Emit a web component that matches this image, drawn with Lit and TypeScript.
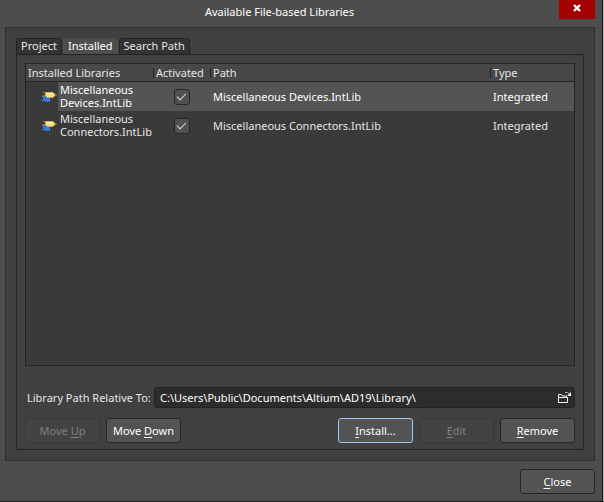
import { LitElement, html, css, svg } from "lit";
import { customElement, state } from "lit/decorators.js";
import { classMap } from "lit/directives/class-map.js";

interface Library {
  name: string[];
  path: string;
  type: string;
  active: boolean;
}

const componentIcon = html`<svg class="part" width="15" height="12" viewBox="0 0 15 12" aria-hidden="true">
  ${svg`
    <path d="M1 4h6l1 2v4H2z" fill="#2f70d4"/>
    <path d="M0 5.500h2M1 7.500h1M0 9.500h2M3.500 10v1M5.500 10v1M7.500 9v2" stroke="#4f94ee" fill="none"/>
    <path d="M3 8.500h4" stroke="#3f82e4" fill="none"/>
    <path d="M1 1.500h3M1 4.500h3" stroke="#8f7d4c" fill="none"/>
    <path d="M3.500 1.500h7.500l2.500 2.500-2.500 2.500h-6l-1.500-1.500z" fill="#f6dc84" stroke="#d0a94c"/>
    <path d="M4 2.500h7" stroke="#fff3bd" fill="none"/>
    <path d="M13 4h2" stroke="#8f7d4c" fill="none"/>`}
</svg>`;

const folderIcon = html`<svg width="14" height="11" viewBox="0 0 14 11" aria-hidden="true">
  <path d="M.5 10.500v-8h3l1 1.500h4v1.500M.5 5.500h9v5h-9z" fill="none" stroke="#f0f0f0"/>
  <path d="M7 .5h2.500l2 1.500" fill="none" stroke="#b0b0b0"/>
  <path d="M13 0v4h-4z" fill="#f0f0f0"/>
</svg>`;

@customElement("app-root")
export class AppRoot extends LitElement {
  @state() private selected = 0;
  @state() private tab = "Installed";
  @state() private libraries: Library[] = [
    { name: ["Miscellaneous", "Devices.IntLib"], path: "Miscellaneous Devices.IntLib", type: "Integrated", active: true },
    { name: ["Miscellaneous", "Connectors.IntLib"], path: "Miscellaneous Connectors.IntLib", type: "Integrated", active: true },
  ];

  static styles = css`
    * { box-sizing: border-box; }
    :host {
      display: flex;
      flex-direction: column;
      min-height: 100vh;
      box-sizing: border-box;
      padding: 0 8px 7px 5px;
      background: #4d4d4d;
      border-right: 1px solid #bdbdbd;
      border-bottom: 1px solid #1a1a1a;
      box-shadow: inset -1px 0 #1a1a1a;
      color: #e6e6e6;
      font: 11px/14px "Noto Sans", "Open Sans", sans-serif;
    }
    button, input { font: inherit; color: inherit; margin: 0; }
    u { text-underline-offset: 2px; text-decoration-skip-ink: none; }

    .titlebar { display: flex; height: 27px; margin-left: -5px; }
    .title { flex: 1; margin: 0; padding-top: 5px; text-align: center; font: inherit; color: #fff; }
    .dismiss {
      display: flex; align-items: center; justify-content: center;
      width: 36px; height: 19px; padding: 0 0 3px; border: 0; background: #a30000;
    }

    .body {
      flex: 1; display: flex; flex-direction: column;
      padding: 10px; border: 1px solid #303030; background: #404040;
    }
    .tabs { display: flex; gap: 1px; }
    .tab {
      height: 17px; padding: 0 4px 1px; margin-bottom: -1px;
      border: 1px solid #242424; border-radius: 3px 3px 0 0;
      background: #333; line-height: 14px;
    }
    .tab.current { background: #4d4d4d; border-color: #4d4d4d; color: #fff; }

    .panel {
      flex: 1; display: flex; flex-direction: column;
      padding: 8px 8px 6px; border: 1px solid #242424;
    }
    .list { flex: 1; border: 1px solid #242424; background: #3a3a3a; }
    table { width: 100%; table-layout: fixed; border-collapse: separate; border-spacing: 0; }
    .c-name { width: 128px; }
    .c-active { width: 57px; }
    .c-type { width: 83px; }
    th {
      height: 18px; padding: 0; background: #484848;
      border-bottom: 1px solid #242424; font-weight: 400; text-align: left;
    }
    .head { display: block; height: 10px; padding-left: 2px; line-height: 10px; white-space: nowrap; }
    th:not(:last-child) .head { border-right: 1px solid #242424; }
    td { height: 29px; padding: 0 0 0 2px; }
    td.name { padding: 0; }
    .entry { display: flex; height: 29px; }
    .part { flex: none; margin: 9px 1px 0 16px; }
    .label { flex: 1; padding: 1px 0 2px 2px; line-height: 13px; white-space: nowrap; }
    .selected td:not(.name), .selected .label { background: #545454; color: #fff; }
    td.active { padding: 0 2px 0 0; text-align: center; }
    .tick {
      appearance: none; display: inline-grid; place-items: center; vertical-align: middle;
      width: 16px; height: 16px; border: 1px solid #262626; border-radius: 3px; background: #505050;
    }
    .tick:checked::before {
      content: ""; width: 8px; height: 4px; margin-top: -2px;
      border: solid #e0e0e0; border-width: 0 0 1px 1px; transform: rotate(-45deg);
    }

    .location { display: flex; align-items: center; margin-top: 21px; gap: 7px; }
    .location label { width: 122px; padding-left: 2px; white-space: nowrap; }
    .field {
      flex: 1; display: flex; align-items: center; height: 21px; padding-right: 2px;
      border: 1px solid #222; border-radius: 3px; background: #2c2c2c;
    }
    .field input { flex: 1; min-width: 0; padding: 0 5px; border: 0; outline: 0; background: none; color: #fff; }
    .browse { display: flex; padding: 0; border: 0; background: none; }

    .actions { display: flex; gap: 6px; margin-top: 10px; }
    .spacer { flex: 1; }
    .btn {
      width: 75px; height: 25px; padding: 0; border: 1px solid #262626; border-radius: 3px;
      background: #535353; color: #fff; text-align: center;
    }
    .btn:disabled { border-color: #3a3a3a; background: #434343; color: #808080; }
    .btn.primary { border-color: #9cc8f0; }
    .footer { display: flex; justify-content: flex-end; margin-top: 8px; }
  `;

  private toggle(index: number) {
    this.libraries = this.libraries.map((l, i) => (i === index ? { ...l, active: !l.active } : l));
  }

  private row(lib: Library, index: number) {
    return html`<tr class=${classMap({ selected: index === this.selected })} @click=${() => (this.selected = index)}>
      <td class="name">
        <div class="entry">${componentIcon}<span class="label">${lib.name[0]}<br />${lib.name[1]}</span></div>
      </td>
      <td class="active">
        <input class="tick" type="checkbox" aria-label="Activated: ${lib.path}"
          .checked=${lib.active} @change=${() => this.toggle(index)} />
      </td>
      <td>${lib.path}</td>
      <td>${lib.type}</td>
    </tr>`;
  }

  render() {
    return html`
      <header class="titlebar">
        <h1 class="title">Available File-based Libraries</h1>
        <button class="dismiss" aria-label="Close window">
          <svg width="8" height="8" viewBox="0 0 8 8"><path d="M1 1l6 6M7 1L1 7" stroke="#fff" stroke-width="2.400" /></svg>
        </button>
      </header>
      <main class="body">
        <div class="tabs" role="tablist">
          ${["Project", "Installed", "Search Path"].map(
            (name) => html`<button role="tab" aria-selected=${name === this.tab}
              class=${classMap({ tab: true, current: name === this.tab })}
              @click=${() => (this.tab = name)}>${name}</button>`
          )}
        </div>
        <section class="panel">
          <div class="list">
            <table>
              <colgroup><col class="c-name" /><col class="c-active" /><col /><col class="c-type" /></colgroup>
              <thead>
                <tr>
                  ${["Installed Libraries", "Activated", "Path", "Type"].map(
                    (h) => html`<th scope="col"><span class="head">${h}</span></th>`
                  )}
                </tr>
              </thead>
              <tbody>${this.libraries.map((lib, i) => this.row(lib, i))}</tbody>
            </table>
          </div>
          <div class="location">
            <label for="path">Library Path Relative To:</label>
            <div class="field">
              <input id="path" type="text" value="C:\\Users\\Public\\Documents\\Altium\\AD19\\Library\\" />
              <button class="browse" aria-label="Browse">${folderIcon}</button>
            </div>
          </div>
          <div class="actions">
            <button class="btn" disabled>Move <u>U</u>p</button>
            <button class="btn">Move <u>D</u>own</button>
            <span class="spacer"></span>
            <button class="btn primary"><u>I</u>nstall...</button>
            <button class="btn" disabled><u>E</u>dit</button>
            <button class="btn"><u>R</u>emove</button>
          </div>
        </section>
      </main>
      <footer class="footer"><button class="btn"><u>C</u>lose</button></footer>
    `;
  }
}
